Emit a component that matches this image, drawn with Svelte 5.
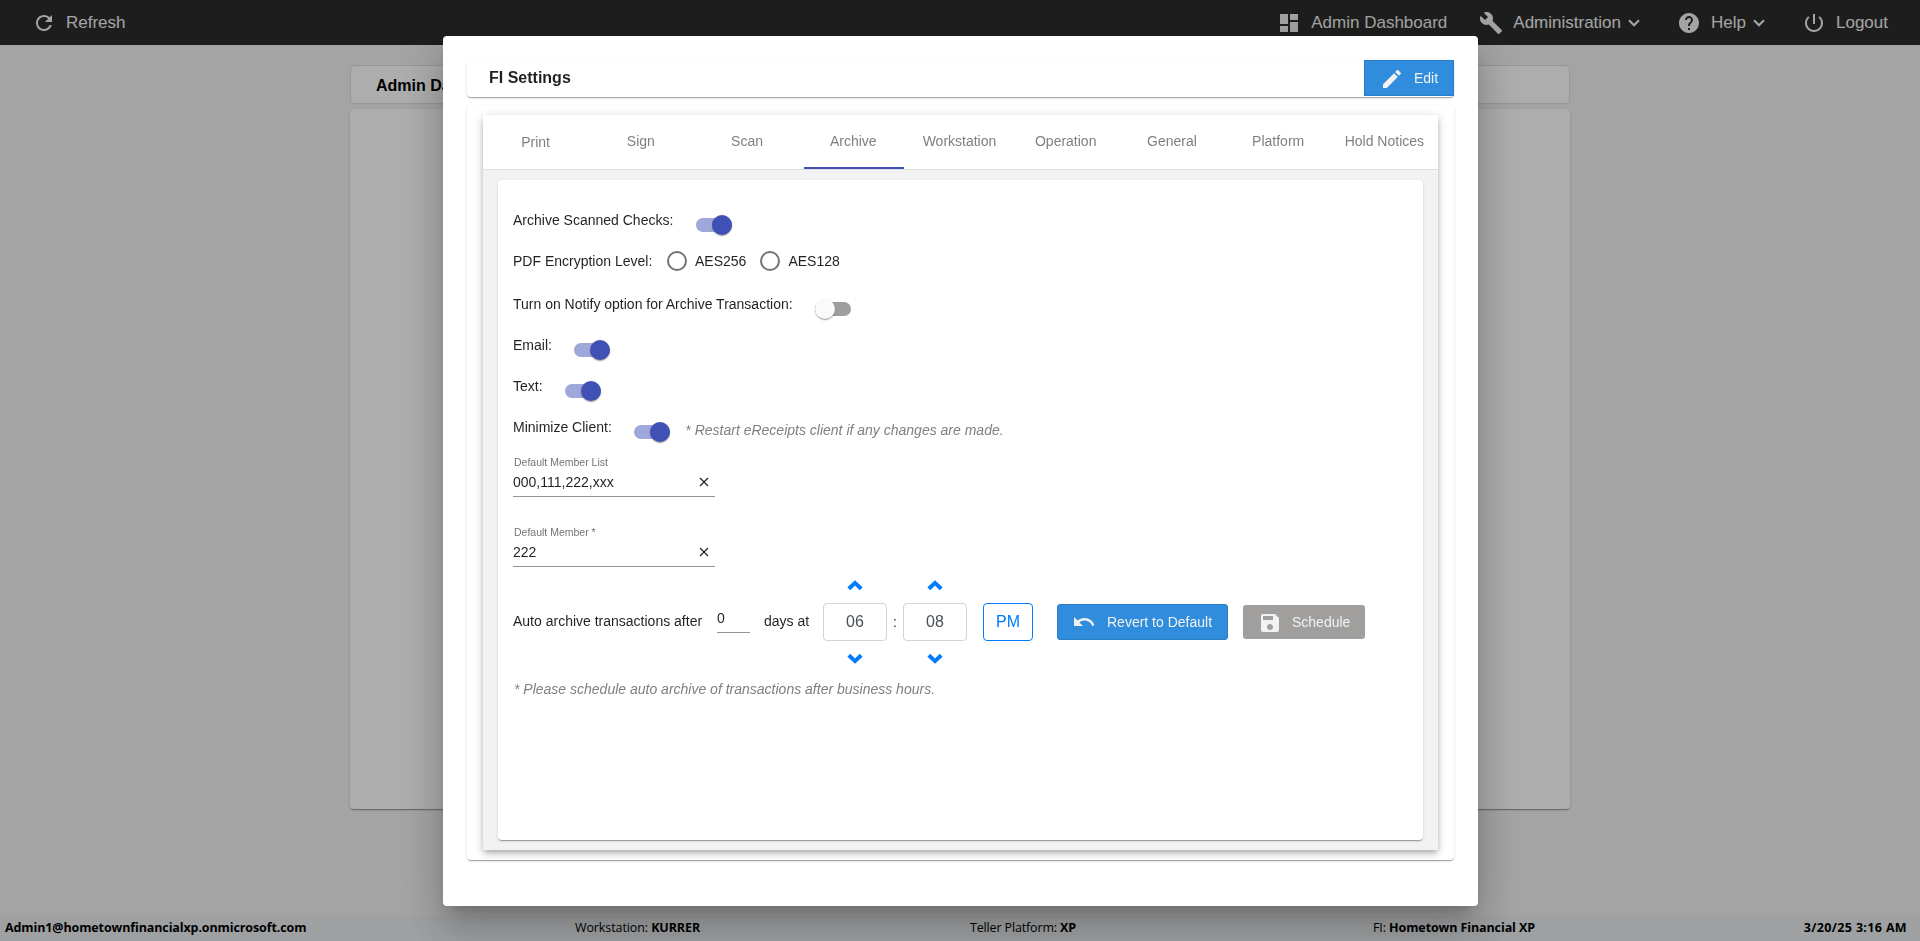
<script>
  const tabs = ['Print', 'Sign', 'Scan', 'Archive', 'Workstation', 'Operation', 'General', 'Platform', 'Hold Notices'];
  let activeTab = 'Archive';

  let archive = {
    scannedChecks: true,
    encryption: '',
    notify: false,
    email: true,
    text: true,
    minimize: true,
    memberList: '000,111,222,xxx',
    member: '222',
    days: '0'
  };

  let hour = 6;
  let minute = 8;
  let meridian = 'PM';

  const pad = (n) => String(n).padStart(2, '0');

  function changeHour(step) {
    hour = ((hour - 1 + step + 12) % 12) + 1;
  }

  function changeMinute(step) {
    minute = (minute + step + 60) % 60;
  }

  function toggle(key) {
    archive[key] = !archive[key];
  }
</script>

<div class="page">
  <header class="navbar">
    <a class="nav-item refresh" href="#refresh">
      <svg class="icon" width="24" height="24" viewBox="0 0 24 24"><path d="M17.65 6.35C16.2 4.9 14.21 4 12 4c-4.42 0-7.99 3.58-7.99 8s3.57 8 7.99 8c3.73 0 6.84-2.55 7.73-6h-2.08c-.82 2.33-3.04 4-5.65 4-3.31 0-6-2.69-6-6s2.69-6 6-6c1.66 0 3.14.69 4.22 1.78L13 11h7V4l-2.35 2.35z" /></svg>
      <span>Refresh</span>
    </a>
    <a class="nav-item dashboard" href="#dashboard">
      <svg class="icon" width="24" height="24" viewBox="0 0 24 24"><path d="M3 13h8V3H3v10zm0 8h8v-6H3v6zm10 0h8V11h-8v10zm0-18v6h8V3h-8z" /></svg>
      <span>Admin Dashboard</span>
    </a>
    <a class="nav-item administration" href="#administration">
      <svg class="icon" width="24" height="24" viewBox="0 0 24 24"><path d="M22.7 19l-9.1-9.1c.9-2.3.4-5-1.5-6.9-2-2-5-2.4-7.4-1.3L9 6 6 9 1.6 4.7C.4 7.1.9 10.1 2.9 12.1c1.9 1.9 4.6 2.4 6.9 1.5l9.1 9.1c.4.4 1 .4 1.4 0l2.3-2.3c.5-.4.5-1.1.1-1.4z" /></svg>
      <span>Administration</span>
      <svg class="caret" width="12" height="8" viewBox="0 0 12 8"><path d="M1 1.2l5 5 5-5" /></svg>
    </a>
    <a class="nav-item help" href="#help">
      <svg class="icon" width="24" height="24" viewBox="0 0 24 24"><path d="M12 2C6.48 2 2 6.48 2 12s4.48 10 10 10 10-4.48 10-10S17.52 2 12 2zm1 17h-2v-2h2v2zm2.07-7.75l-.9.92C13.45 12.9 13 13.5 13 15h-2v-.5c0-1.1.45-2.1 1.17-2.83l1.24-1.26c.37-.36.59-.86.59-1.41 0-1.1-.9-2-2-2s-2 .9-2 2H8c0-2.21 1.79-4 4-4s4 1.79 4 4c0 .88-.36 1.68-.93 2.25z" /></svg>
      <span>Help</span>
      <svg class="caret" width="12" height="8" viewBox="0 0 12 8"><path d="M1 1.2l5 5 5-5" /></svg>
    </a>
    <a class="nav-item logout" href="#logout">
      <svg class="icon" width="24" height="24" viewBox="0 0 24 24"><path d="M13 3h-2v10h2V3zm4.83 2.17l-1.42 1.42C17.99 7.86 19 9.81 19 12c0 3.87-3.13 7-7 7s-7-3.13-7-7c0-2.19 1.01-4.14 2.58-5.42L6.17 5.17C4.23 6.82 3 9.26 3 12c0 4.97 4.03 9 9 9s9-4.03 9-9c0-2.74-1.23-5.18-3.17-6.83z" /></svg>
      <span>Logout</span>
    </a>
  </header>

  <main class="main">
    <div class="main-title">Admin Dashboard</div>
    <div class="main-body"></div>
  </main>

  <footer class="footer">
    <span class="user"><b>Admin1@hometownfinancialxp.onmicrosoft.com</b></span>
    <span class="workstation">Workstation: <b>KURRER</b></span>
    <span class="teller">Teller Platform: <b>XP</b></span>
    <span class="fi">FI: <b>Hometown Financial XP</b></span>
    <span class="date"><b>3/20/25 3:16 AM</b></span>
  </footer>
</div>

<div class="backdrop">
  <div class="dialog" role="dialog" aria-label="FI Settings">
    <div class="dialog-title">
      <h2>FI Settings</h2>
      <button class="btn btn-edit">
        <svg width="24" height="24" viewBox="0 0 24 24"><path d="M3 17.25V21h3.75L17.81 9.94l-3.75-3.75L3 17.25zM20.71 7.04c.39-.39.39-1.02 0-1.41l-2.34-2.34c-.39-.39-1.02-.39-1.41 0l-1.83 1.83 3.75 3.75 1.83-1.83z" /></svg>
        <span>Edit</span>
      </button>
    </div>

    <div class="dialog-card">
      <div class="tab-group">
        <div class="tab-header">
          {#each tabs as tab (tab)}
            <button class="tab" class:active={tab === activeTab} on:click={() => (activeTab = tab)}>{tab}</button>
          {/each}
        </div>

        <div class="tab-body">
          <div class="panel">
            <div class="row">
              <span>Archive Scanned Checks:</span>
              <button class="switch" class:on={archive.scannedChecks} aria-label="Archive Scanned Checks" on:click={() => toggle('scannedChecks')}><i></i></button>
            </div>

            <div class="row radio-row">
              <span class="radio-title">PDF Encryption Level:</span>
              {#each ['AES256', 'AES128'] as level (level)}
                <label class="radio">
                  <input type="radio" name="encryption" value={level} bind:group={archive.encryption} />
                  {level}
                </label>
              {/each}
            </div>

            <div class="row">
              <span>Turn on Notify option for Archive Transaction:</span>
              <button class="switch" class:on={archive.notify} aria-label="Notify" on:click={() => toggle('notify')}><i></i></button>
            </div>

            <div class="row">
              <span>Email:</span>
              <button class="switch" class:on={archive.email} aria-label="Email" on:click={() => toggle('email')}><i></i></button>
            </div>

            <div class="row">
              <span>Text:</span>
              <button class="switch" class:on={archive.text} aria-label="Text" on:click={() => toggle('text')}><i></i></button>
            </div>

            <div class="row">
              <span>Minimize Client:</span>
              <button class="switch" class:on={archive.minimize} aria-label="Minimize Client" on:click={() => toggle('minimize')}><i></i></button>
              <em class="hint restart-hint">* Restart eReceipts client if any changes are made.</em>
            </div>

            <div class="field">
              <label for="memberList">Default Member List</label>
              <div class="field-line">
                <input id="memberList" bind:value={archive.memberList} />
                <button class="clear" aria-label="Clear" on:click={() => (archive.memberList = '')}>
                  <svg width="10" height="10" viewBox="0 0 10 10"><path d="M1 1l8 8M9 1L1 9" /></svg>
                </button>
              </div>
            </div>

            <div class="field second">
              <label for="member">Default Member *</label>
              <div class="field-line">
                <input id="member" bind:value={archive.member} />
                <button class="clear" aria-label="Clear" on:click={() => (archive.member = '')}>
                  <svg width="10" height="10" viewBox="0 0 10 10"><path d="M1 1l8 8M9 1L1 9" /></svg>
                </button>
              </div>
            </div>

            <div class="schedule">
              <span class="after">Auto archive transactions after</span>
              <input class="days" aria-label="Days" bind:value={archive.days} />
              <span class="days-at">days at</span>

              <div class="spinner">
                <button class="up" aria-label="Hour up" on:click={() => changeHour(1)}>
                  <svg width="16" height="11" viewBox="0 0 16 11"><path d="M1.8 8.8L8 2.9l6.2 5.9" /></svg>
                </button>
                <div class="time">{pad(hour)}</div>
                <button class="down" aria-label="Hour down" on:click={() => changeHour(-1)}>
                  <svg width="16" height="11" viewBox="0 0 16 11"><path d="M1.8 2.2L8 8.1l6.2-5.9" /></svg>
                </button>
              </div>
              <span class="colon">:</span>
              <div class="spinner">
                <button class="up" aria-label="Minute up" on:click={() => changeMinute(1)}>
                  <svg width="16" height="11" viewBox="0 0 16 11"><path d="M1.8 8.8L8 2.9l6.2 5.9" /></svg>
                </button>
                <div class="time">{pad(minute)}</div>
                <button class="down" aria-label="Minute down" on:click={() => changeMinute(-1)}>
                  <svg width="16" height="11" viewBox="0 0 16 11"><path d="M1.8 2.2L8 8.1l6.2-5.9" /></svg>
                </button>
              </div>

              <button class="meridian" on:click={() => (meridian = meridian === 'PM' ? 'AM' : 'PM')}>{meridian}</button>

              <button class="btn btn-revert">
                <svg width="24" height="24" viewBox="0 0 24 24"><path d="M12.5 8c-2.65 0-5.05.99-6.9 2.6L2 7v9h9l-3.62-3.62c1.39-1.16 3.16-1.88 5.12-1.88 3.54 0 6.55 2.31 7.6 5.5l2.37-.78C21.08 11.03 17.15 8 12.5 8z" /></svg>
                <span>Revert to Default</span>
              </button>
              <button class="btn btn-schedule" disabled>
                <svg width="24" height="24" viewBox="0 0 24 24"><path d="M17 3H5c-1.11 0-2 .9-2 2v14c0 1.1.89 2 2 2h14c1.1 0 2-.9 2-2V7l-4-4zm-5 16c-1.66 0-3-1.34-3-3s1.34-3 3-3 3 1.34 3 3-1.34 3-3 3zm3-10H5V5h10v4z" /></svg>
                <span>Schedule</span>
              </button>
            </div>

            <em class="hint schedule-hint">* Please schedule auto archive of transactions after business hours.</em>
          </div>
        </div>
      </div>
    </div>
  </div>
</div>

<style>
  :global(body) {
    margin: 0;
    overflow: hidden;
    font-family: Arial, 'Liberation Sans', sans-serif;
  }

  * {
    box-sizing: border-box;
  }

  button,
  input {
    font-family: inherit;
    margin: 0;
    padding: 0;
    border: none;
    background: none;
    outline: none;
  }

  .page {
    display: flex;
    flex-direction: column;
    height: 100vh;
    background: #f2f2f2;
  }

  /* top bar */
  .navbar {
    display: flex;
    align-items: center;
    height: 45px;
    padding: 0 32px;
    background: #2c2c2c;
  }

  .nav-item {
    display: flex;
    align-items: center;
    color: #f2f2f2;
    font-size: 17px;
    line-height: 20px;
    text-decoration: none;
    white-space: nowrap;
  }

  .nav-item span {
    margin-left: 10px;
  }

  .icon {
    fill: #f2f2f2;
  }

  .caret {
    margin-left: 7px;
    fill: none;
    stroke: #f2f2f2;
    stroke-width: 2.1;
  }

  .refresh {
    margin-right: auto;
  }

  .administration {
    margin-left: 32px;
  }

  .help {
    margin-left: 37px;
  }

  .logout {
    margin-left: 37px;
  }

  /* page behind the dialog */
  .main {
    flex: 1;
    width: 1220px;
    margin: 0 auto;
    padding-top: 20px;
  }

  .main-title {
    height: 39px;
    padding-left: 25px;
    border: 1px solid #dfdfdf;
    border-radius: 4px;
    background: #fff;
    color: #000;
    font-size: 16px;
    font-weight: bold;
    line-height: 39px;
  }

  .main-body {
    height: 700px;
    margin-top: 5px;
    border-radius: 4px;
    background: #fff;
    box-shadow: 0 2px 1px -1px rgba(0, 0, 0, 0.2), 0 1px 1px 0 rgba(0, 0, 0, 0.14), 0 1px 3px 0 rgba(0, 0, 0, 0.12);
  }

  .footer {
    display: flex;
    align-items: center;
    height: 26px;
    padding: 0 13px 0 5px;
    background: #e9ecef;
    color: #000;
    font-family: 'Segoe UI', 'Open Sans', sans-serif;
    font-size: 12.5px;
    line-height: 26px;
    white-space: nowrap;
  }

  .user {
    width: 570px;
    letter-spacing: -0.11px;
  }

  .workstation {
    width: 395px;
    letter-spacing: -0.1px;
  }

  .teller {
    width: 403px;
    letter-spacing: -0.15px;
  }

  .fi {
    letter-spacing: -0.1px;
  }

  .date {
    margin-left: auto;
    letter-spacing: 0.35px;
  }

  /* dialog */
  .backdrop {
    position: fixed;
    inset: 0;
    display: flex;
    justify-content: center;
    align-items: flex-start;
    padding: 36px 0 0 1px;
    background: rgba(0, 0, 0, 0.32);
  }

  .dialog {
    width: 1035px;
    height: 870px;
    padding: 24px;
    border-radius: 4px;
    background: #fff;
    color: rgba(0, 0, 0, 0.87);
    font-size: 14px;
    line-height: 20px;
    box-shadow: 0 11px 15px -7px rgba(0, 0, 0, 0.2), 0 24px 38px 3px rgba(0, 0, 0, 0.14), 0 9px 46px 8px rgba(0, 0, 0, 0.12);
  }

  .dialog-title,
  .dialog-card,
  .panel {
    border-radius: 4px;
    background: #fff;
    box-shadow: 0 2px 1px -1px rgba(0, 0, 0, 0.2), 0 1px 1px 0 rgba(0, 0, 0, 0.14), 0 1px 3px 0 rgba(0, 0, 0, 0.12);
  }

  .dialog-title {
    display: flex;
    justify-content: space-between;
    height: 37px;
    padding-left: 22px;
  }

  .dialog-title h2 {
    margin: 0;
    font-size: 16px;
    line-height: 35px;
  }

  .dialog-card {
    height: 755px;
    margin-top: 8px;
    padding: 10px 16px;
  }

  .tab-group {
    display: flex;
    flex-direction: column;
    height: 735px;
    background: #f2f2f2;
    box-shadow: 0 3px 5px -1px rgba(0, 0, 0, 0.2), 0 5px 8px 0 rgba(0, 0, 0, 0.1), 0 1px 10px 0 rgba(0, 0, 0, 0.12);
  }

  .tab-header {
    display: flex;
    height: 55px;
    border-bottom: 1px solid #dfdfdf;
    background: #fff;
  }

  .tab {
    flex: 1 1 0;
    min-width: 0;
    margin: 0 3px;
    padding: 0 1px 1px 0;
    border-bottom: 2px solid transparent;
    color: #808080;
    font-size: 14px;
    white-space: nowrap;
    cursor: pointer;
  }

  .tab:first-child {
    padding: 1px 0 0;
  }

  .tab.active {
    border-bottom-color: #3f51b5;
  }

  .tab-body {
    flex: 1;
    padding: 10px 15px;
  }

  .panel {
    height: 660px;
    padding: 19px 15px 0;
  }

  .row {
    display: flex;
    align-items: center;
    height: 41px;
  }

  .radio-row {
    margin-bottom: 2px;
  }

  /* slide toggle */
  .switch {
    display: flex;
    align-items: center;
    width: 36px;
    height: 14px;
    margin: 10px 0 0 22.5px;
    border-radius: 7px;
    background: #9e9e9e;
    cursor: pointer;
  }

  .switch i {
    flex: none;
    width: 20px;
    height: 20px;
    border-radius: 50%;
    background: #fafafa;
    box-shadow: 0 2px 1px -1px rgba(0, 0, 0, 0.2), 0 1px 1px 0 rgba(0, 0, 0, 0.14), 0 1px 3px 0 rgba(0, 0, 0, 0.12);
  }

  .switch.on {
    justify-content: flex-end;
    background: #9fa8da;
  }

  .switch.on i {
    background: #3f51b5;
  }

  .radio-title {
    width: 154px;
  }

  .radio {
    display: flex;
    align-items: center;
    gap: 8px;
    margin-right: 14px;
  }

  .radio input {
    appearance: none;
    width: 20px;
    height: 20px;
    border: 2px solid #737373;
    border-radius: 50%;
  }

  .radio input:checked {
    border: 5px solid #3f51b5;
  }

  .hint {
    color: #808080;
  }

  .restart-hint {
    margin: 7px 0 0 15px;
  }

  .field {
    width: 202px;
    margin-top: 9px;
  }

  .field.second {
    margin-top: 29px;
  }

  .field label {
    display: block;
    height: 16px;
    padding-left: 1px;
    color: #757575;
    font-size: 10.5px;
    line-height: 12px;
  }

  .field-line {
    display: flex;
    align-items: center;
    height: 25px;
    padding-bottom: 4px;
    border-bottom: 1px solid #949494;
  }

  .field-line input {
    flex: 1;
    min-width: 0;
    height: 20px;
    color: rgba(0, 0, 0, 0.87);
    font-size: 14px;
  }

  .clear {
    display: flex;
    margin-right: 6px;
    cursor: pointer;
  }

  .clear path {
    stroke: #222;
    stroke-width: 1.2;
  }

  /* auto archive schedule */
  .schedule {
    display: flex;
    align-items: center;
    height: 108px;
    white-space: nowrap;
  }

  .after {
    width: 204px;
  }

  .days {
    width: 33px;
    height: 24px;
    padding-bottom: 5px;
    border-bottom: 1px solid #949494;
    color: rgba(0, 0, 0, 0.87);
    font-size: 14px;
  }

  .days-at {
    width: 59px;
    margin-left: 14px;
  }

  .spinner {
    width: 64px;
  }

  .up,
  .down {
    display: flex;
    align-items: center;
    justify-content: center;
    width: 100%;
    height: 36px;
    cursor: pointer;
  }

  .down {
    height: 34px;
  }

  .up path,
  .down path {
    fill: none;
    stroke: #007bff;
    stroke-width: 4;
  }

  .time {
    height: 38px;
    border: 1px solid #ced4da;
    border-radius: 4px;
    color: #495057;
    font-size: 16px;
    line-height: 36px;
    text-align: center;
  }

  .colon {
    width: 16px;
    padding-top: 2px;
    text-align: center;
  }

  .meridian {
    width: 50px;
    height: 38px;
    margin: 2px 24px 0 16px;
    border: 1px solid #007bff;
    border-radius: 4px;
    color: #007bff;
    font-size: 16px;
    cursor: pointer;
  }

  .btn {
    display: flex;
    align-items: center;
    border: 1px solid #2a7fc7;
    background: #308cdc;
    color: #f2f2f2;
    font-size: 14px;
    line-height: 20px;
    cursor: pointer;
  }

  .btn svg {
    fill: #f2f2f2;
  }

  .btn-edit {
    width: 90px;
    height: 36px;
    padding-left: 15px;
  }

  .btn-edit svg {
    margin-top: 2px;
  }

  .btn-edit span {
    margin-left: 10px;
  }

  .btn-revert {
    width: 171px;
    height: 36px;
    margin-top: 2px;
    padding-left: 14px;
    border-radius: 3px;
  }

  .btn-revert span {
    margin-left: 11px;
  }

  .btn-schedule {
    width: 122px;
    height: 34px;
    margin: 2px 0 0 15px;
    padding-left: 15px;
    border: none;
    border-radius: 3px;
    background: #a09f9e;
  }

  .btn-schedule svg {
    margin-top: 2px;
  }

  .btn-schedule span {
    margin-left: 10px;
  }

  .schedule-hint {
    display: block;
    padding: 4px 0 0 1px;
  }
</style>
